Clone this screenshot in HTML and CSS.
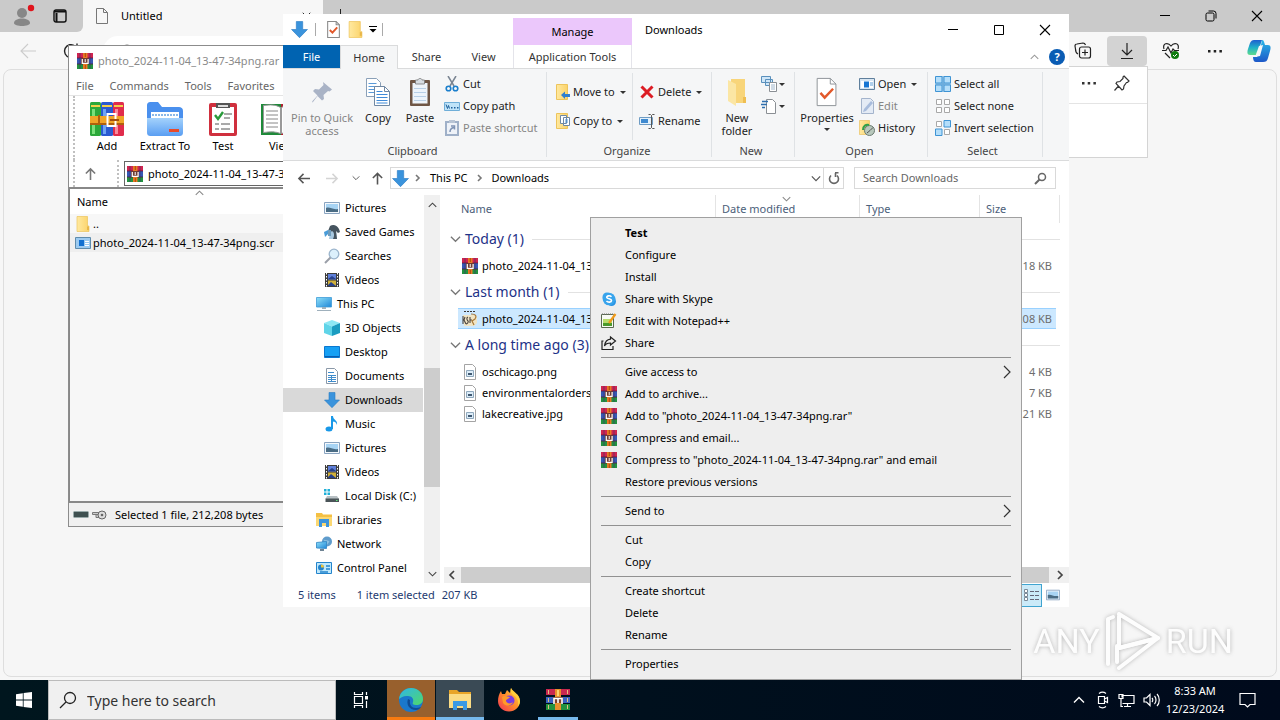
FILE: index.html
```html
<!DOCTYPE html>
<html lang="en">
<head>
<meta charset="utf-8">
<title>Desktop</title>
<meta name="viewport" content="width=device-width, initial-scale=1">
<link rel="stylesheet" href="styles.css">
</head>
<body>
<svg class="sprite" aria-hidden="true">
  <defs>
    <linearGradient id="g-folder" x1="0" x2="1"><stop offset="0" stop-color="#ffe9a0"/><stop offset="1" stop-color="#fbd36a"/></linearGradient>
    <linearGradient id="g-blue" x1="0" x2="1" y1="0" y2="1"><stop offset="0" stop-color="#8fe0f8"/><stop offset="1" stop-color="#1f87d8"/></linearGradient>
    <linearGradient id="g-folderblue" x1="0" x2="0" y1="0" y2="1"><stop offset="0" stop-color="#a4d2fc"/><stop offset="1" stop-color="#5a9ef2"/></linearGradient>
    <linearGradient id="g-cop1" x1="0" x2="0" y1="0" y2="1"><stop offset="0" stop-color="#1e5fd0"/><stop offset=".5" stop-color="#20b0c8"/><stop offset="1" stop-color="#5fdc8c"/></linearGradient>
    <linearGradient id="g-cop2" x1="0" x2="0" y1="0" y2="1"><stop offset="0" stop-color="#2ab8e8"/><stop offset="1" stop-color="#1d58c8"/></linearGradient>
    <linearGradient id="g-edge" x1="0" x2="1" y1="0" y2="1"><stop offset="0" stop-color="#2fb6e8"/><stop offset="1" stop-color="#4fd86a"/></linearGradient>
    <linearGradient id="g-fox" x1="1" x2="0" y1="0" y2="1"><stop offset="0" stop-color="#ffe14a"/><stop offset=".5" stop-color="#ff8a2a"/><stop offset="1" stop-color="#f0305a"/></linearGradient>
  </defs>
  <symbol id="rar" viewBox="0 0 16 16">
    <path fill="#cf2450" d="M0 0h16v5H0z"/><path fill="#3558b4" d="M0 5h16v6H0z"/><path fill="#22923f" d="M0 11h16v5H0z"/>
    <path fill="#5a1030" d="M0 4.500h16v1H0zM0 10.500h16v1H0z" opacity=".7"/>
    <path fill="#40306a" d="M2.500 0h1v16h-1zM12.500 0h1v16h-1z" opacity=".6"/>
    <path fill="#ea7a24" d="M6 0h4.500v5H6zM6 11h4.500v5H6z"/><path fill="#a84a10" d="M7.800 0h1v4h-1zM7.800 12h1v4h-1z"/>
    <path fill="#6f3c34" d="M4 5h8v6H4z"/><path fill="none" stroke="#fff" stroke-width="1.200" d="M5.300 6v4.400h5.800V6"/><path fill="#fff" d="M7.700 6h1v3h-1z"/>
  </symbol>
  <symbol id="downarrow" viewBox="0 0 16 16"><path fill="#3a93dc" stroke="#2a7dc4" stroke-width=".6" d="M5 .5h6V8h4.500L8 15.700.5 8H5z"/></symbol>
  <symbol id="folder" viewBox="0 0 16 16"><path fill="url(#g-folder)" stroke="#edc45c" stroke-width=".7" d="M2 .5h10.500V10H14v5.500H2z"/><path fill="#e8b648" d="M12 10.500h2V14h-2z"/></symbol>
  <symbol id="chk" viewBox="0 0 16 16"><path fill="#fff" stroke="#8a8a8a" d="M2.500.5h8l3 3v12h-11z"/><path fill="none" stroke="#8a8a8a" d="M10.500.5v3h3"/><path fill="none" stroke="#e2582a" stroke-width="1.800" d="M4.500 8.500 7 11l4.500-5"/></symbol>
  <symbol id="bigchk" viewBox="0 0 24 32"><path fill="#fff" stroke="#8a8f94" d="M1.500 1.500h14l6 6v23h-20z"/><path fill="none" stroke="#8a8f94" d="M15.500 1.500v6h6"/><path fill="none" stroke="#e2582a" stroke-width="2.600" d="m5 17 4.500 5 9-9.500"/></symbol>
  <symbol id="pin" viewBox="0 0 24 24"><path fill="#a9b3c6" d="m13 2 9 7.500-2.500 2-1.500-.5-4.500 4 .5 4-2 1.500-4.500-4.500L3 22l-1 .5L2.500 21l5-5.500L3 11l2-2 4 .5 4.500-4.500z"/></symbol>
  <symbol id="copydocs" viewBox="0 0 26 30"><path fill="#fff" stroke="#8aa0b8" d="M1.500 1.500h10l4 4v14h-14z"/><path stroke="#5a9ad8" d="M3.500 6.500h8m-8 3h10m-10 3h10m-10 3h10"/><path fill="#fff" stroke="#6f88a4" d="M9.500 9.500h10l5 5v14h-15z"/><path fill="none" stroke="#6f88a4" d="M19.500 9.500v5h5"/><path stroke="#3f8ad8" d="M11.500 14.500h6m-6 3h11m-11 3h11m-11 3h11m-11 2.500h11"/></symbol>
  <symbol id="clip" viewBox="0 0 22 30"><rect x="1" y="3" width="20" height="26" rx="1" fill="#6f5645"/><path fill="#eef4fa" d="M3.500 6h15v20.500h-15z"/><path fill="#d8dde2" stroke="#777" stroke-width=".8" d="M6.500 3h2.500c0-2 4-2 4 0h2.500v4h-9z"/><path stroke="#b8cfe6" d="M5 11.500h12m-12 4h12m-12 4h12m-12 4h12"/></symbol>
  <symbol id="scissors" viewBox="0 0 14 16"><path fill="none" stroke="#7a8592" stroke-width="1.500" d="m3 0 6 10M11 0 5 10"/><circle cx="3.500" cy="12.500" r="2.300" fill="none" stroke="#1b7fcc" stroke-width="1.600"/><circle cx="10.500" cy="12.500" r="2.300" fill="none" stroke="#1b7fcc" stroke-width="1.600"/></symbol>
  <symbol id="cpath" viewBox="0 0 16 16"><path fill="#bfe3f8" stroke="#6faed8" d="M.5 4.500h15v8H.5z"/><path fill="none" stroke="#1d5f9a" d="m2 6.500 1.500 4 1-3 1 3"/><path fill="#1d5f9a" d="M7 9h1.500v1.500H7zM10 9h1.500v1.500H10zM13 9h1.500v1.500H13z"/></symbol>
  <symbol id="pshort" viewBox="0 0 14 16"><path fill="#9fb0c8" d="M0 1h14v15H0z"/><path fill="#eef2f8" d="M2 3h10v11H2z"/><path fill="#b8c4d4" d="M4 0h6v3H4z"/><path fill="none" stroke="#7f93b4" stroke-width="1.500" d="M5 12c0-3 1-4 4-4.500M6 6h3.500v3.500"/></symbol>
  <symbol id="moveto" viewBox="0 0 14 16"><path fill="url(#g-folder)" stroke="#edc45c" d="M.5.5h11v15H.5z"/><path fill="#2f7fd0" d="m5 11 4-3.500V10h5v3H9v2z"/></symbol>
  <symbol id="copyto" viewBox="0 0 14 16"><path fill="url(#g-folder)" stroke="#edc45c" d="M.5.5h11v15H.5z"/><path fill="#fff" stroke="#6f88a4" d="M4.500 2.500h6v8h-6zM7.500 4.500h6v8h-6z"/><path stroke="#4f94d8" d="M9 7h3M9 9h3"/></symbol>
  <symbol id="redx" viewBox="0 0 14 14"><path fill="none" stroke="#dc1c24" stroke-width="3" d="m1.500 1.500 11 11m0-11-11 11"/></symbol>
  <symbol id="rename" viewBox="0 0 16 16"><path fill="#e4f1fb" stroke="#6f9cc4" d="M.5 4.500h13v7H.5z"/><path fill="#3f8ad0" d="M2 6h7v4H2z"/><path fill="none" stroke="#555" d="M9.500 1.500h2l1 1 1-1h2m-3 1v12m-3 1h2l1-1 1 1h2"/></symbol>
  <symbol id="bigfolder" viewBox="0 0 22 30"><path fill="#f8d57a" d="M5 2h14v24H5z"/><path fill="#fbe6a4" d="m2 3 8 4v22l-8-5z"/><path fill="#efbe52" d="M17 20h3v6h-3z"/></symbol>
  <symbol id="newitem" viewBox="0 0 16 16"><path fill="#cfe6f8" stroke="#5a90bc" d="M.5.500h9v6h-9zM4.500 3.500h7v6h-7z"/><path fill="#fff" stroke="#8a8f94" d="M8.500 6.500h7v9h-7z"/><path stroke="#9fb6cc" d="M10 9h4m-4 2h4m-4 2h4"/></symbol>
  <symbol id="easy" viewBox="0 0 16 16"><path fill="#fff" stroke="#8a8f94" d="M5.500 1.500h6l3 3v11h-9z"/><path stroke="#2f6fae" stroke-width="1.300" d="M1 3.500h6M0 6.500h6M1 9.500h3"/></symbol>
  <symbol id="open" viewBox="0 0 16 12"><path fill="#d8e6f2" stroke="#5f7f9c" d="M.5.500h15v11H.5z"/><path fill="#fff" d="M2 3h12v7H2z"/><path fill="#1976d2" d="M5 3.500h5v6H5z"/><path stroke="#5f9fd8" d="M11 5h3m-3 2h3"/></symbol>
  <symbol id="edit" viewBox="0 0 16 16"><path fill="#e4ebf5" stroke="#a4b4cc" d="M2.500.5h9l3 3v12h-12z"/><path fill="#a8bcdc" d="m4 14 1-3 7-8 2 2-7 8z"/></symbol>
  <symbol id="history" viewBox="0 0 16 16"><path fill="url(#g-folder)" stroke="#e8bb50" stroke-width=".6" d="M.5.500h10v14H.5z"/><circle cx="10.500" cy="10.500" r="5" fill="#b8c8bc" stroke="#6a7a70"/><path fill="none" stroke="#2fa04a" stroke-width="2" d="M4 10c0-4 3-6 6-5"/><path fill="none" stroke="#555" d="m8 13 3-2.500 3-3"/></symbol>
  <symbol id="selall" viewBox="0 0 16 16"><path fill="#b4defa" stroke="#3f94d4" d="M.5.500h6.500v6.500H.5zM9 .5h6.500v6.500H9zM.5 9h6.500v6.500H.5zM9 9h6.500v6.500H9z"/><path stroke="#3f94d4" d="M8 0v16M0 8h16"/></symbol>
  <symbol id="selnone" viewBox="0 0 16 16"><path fill="#fff" stroke="#a8a8a8" d="M1.500 1.500h5v5h-5zM9.500 1.500h5v5h-5zM1.500 9.500h5v5h-5zM9.500 9.500h5v5h-5z"/></symbol>
  <symbol id="selinv" viewBox="0 0 16 16"><path fill="#fff" stroke="#a8a8a8" d="M1.500 1.500h5v5h-5zM9.500 9.500h5v5h-5z"/><path fill="#b4defa" stroke="#3f94d4" d="M9 .5h6.500v6.500H9zM.5 9h6.500v6.500H.5z"/></symbol>
  <symbol id="pictures" viewBox="0 0 16 16"><path fill="#f4f8fc" stroke="#8aa4c0" d="M.5 2.500h15v11H.5z"/><path fill="#a8d4f4" d="M2 4h12v8H2z"/><path fill="#4a6c84" d="M2 8c4-1.500 6 2 12 1v3H2z"/></symbol>
  <symbol id="games" viewBox="0 0 16 16"><path fill="#a8c8e0" d="M7 3c3-3 5 0 5 3l1 9H5c1-4 0-6 0-8z"/><path fill="#46545f" d="M6 2c3-2 7-1 9 3l1 3-2 1-2-2 1 8H9c2-4 1-7-1-8l-3 2-1-2z"/><path fill="#4a9cd8" d="m0 8 4-2v4l-3 3z"/><path fill="#6f9cbc" d="M4 6h3v6H4z"/></symbol>
  <symbol id="search" viewBox="0 0 16 16"><circle cx="10" cy="6" r="4.800" fill="#dcf0fc" stroke="#9ab4cc" stroke-width="1.300"/><path stroke="#9a9fa8" stroke-width="2" d="M6.500 9.500 1 15"/></symbol>
  <symbol id="videos" viewBox="0 0 16 16"><path fill="#3c3c3c" d="M1 1h14v14H1z"/><path fill="#5f7fd8" d="M4 2h8v5.500H4z"/><path fill="#d0b03a" d="M4 8.500h8V14H4z"/><path fill="#26408c" d="m4 7 4-3 4 3zM4 13l3-3 5 4H4z"/><path stroke="#fff" stroke-dasharray="1.500 1.500" d="M2.500 1v14m11-14v14"/></symbol>
  <symbol id="thispc" viewBox="0 0 16 16"><path fill="url(#g-blue)" stroke="#3f9cd8" stroke-width=".8" d="M.5 1.500h15v9.500H.5z"/><path fill="#9fb0bc" d="M6 11h4v2H6zM1 14h14v1H1z"/></symbol>
  <symbol id="cube" viewBox="0 0 16 16"><path fill="#8ce8f4" d="m8 0 8 3-8 3.500L0 3z"/><path fill="#5fd4e8" d="m0 3 8 3.500V16l-8-3z"/><path fill="#1a9cc0" d="m16 3-8 3.500V16l8-3z"/></symbol>
  <symbol id="desk" viewBox="0 0 16 16"><path fill="#16a0f4" stroke="#0a78d0" d="M.5 2.500h15v11H.5z"/><path stroke="#0a5cb0" d="M1 12.500h14"/></symbol>
  <symbol id="docs" viewBox="0 0 16 16"><path fill="#fff" stroke="#8a98a8" d="M2.500.5h8l3 3v12h-11z"/><path stroke="#3f8ccc" d="M4 4.500h6M4 7.500h8M4 9.500h8m-8 2h8m-8 2h8M7.500 7v7"/></symbol>
  <symbol id="music" viewBox="0 0 16 16"><ellipse cx="5" cy="13" rx="3.500" ry="2.500" fill="#1898e8"/><path fill="#1898e8" d="M7 0h2c0 4 5 4 4 9-1-3-2-3-4-3.500V13H7z"/></symbol>
  <symbol id="disk" viewBox="0 0 16 16"><path fill="#20b0d8" d="M0 1h2.500v2.500H0zM3.500 1H6v2.500H3.500zM0 4.500h2.500V7H0zM3.500 4.500H6V7H3.500z"/><path fill="#b8c0c4" d="m3 8h10l2 3H1.500z"/><path fill="#4a5458" d="M1.500 10.500h13.500v3.500H1.500z"/><path fill="#5fe87a" d="M12 12h1.500v1H12z"/></symbol>
  <symbol id="libs" viewBox="0 0 16 16"><path fill="#f4c044" d="M0 1h6l1 1.500h9V14H0z"/><path fill="#fbd873" d="M0 5h16v9H0z"/><path fill="#3c94dc" d="M3 7h10v8h-3v-4H6v4H3z"/></symbol>
  <symbol id="net" viewBox="0 0 16 16"><circle cx="11" cy="5.500" r="5" fill="#5f9ccc"/><path fill="#8cc0e0" d="M7.500 3.500c2 1 4 0 6 2l-3 4z"/><path fill="url(#g-blue)" stroke="#2f84c4" stroke-width=".8" d="m.5 6.500 10-1v7l-10-.5z"/><path fill="#6f8494" d="M4 13h4v2H4z"/></symbol>
  <symbol id="cpl" viewBox="0 0 16 16"><path fill="#bfe8fc" stroke="#2484cc" d="M.5 2.500h15v11H.5z"/><circle cx="5" cy="7.500" r="3" fill="#2484cc"/><path fill="#f0c43a" d="M5 7.500v-3a3 3 0 0 1 3 3z"/><path stroke="#2484cc" stroke-width="1.400" d="M10 6h4m-4 3h4M4 12h8"/></symbol>
  <symbol id="imgfile" viewBox="0 0 16 16"><path fill="#fff" stroke="#a4a4a4" d="M2.500.5h8l3 3v12h-11z"/><path fill="#dcecf8" stroke="#8fa8bc" d="M4.500 6.500h7v6h-7z"/><path fill="#3f5870" d="M6 9h4v2H6z"/></symbol>
  <symbol id="scrfile" viewBox="0 0 16 16"><path fill="#f0e4c4" d="M1 4h12l2 2v6l-3 3H2z"/><path stroke="#3a3430" stroke-dasharray="2 1" d="M2 .5h12"/><path fill="none" stroke="#4a4440" stroke-width="1.100" d="M1 5v8m2-7-1 3 2 4m2-7c-2 1-1 3 0 4s-1 3-2 3m4-7v6m0-3h2"/><path fill="none" stroke="#a87838" stroke-width="1.200" d="M9 3c5 0 6 2 4 5l-3 2 2 4"/></symbol>
  <symbol id="scrapp" viewBox="0 0 16 12"><path fill="#9ccaf0" stroke="#5f8cac" d="M.5.500h15v11H.5z"/><path fill="#1270d0" d="M4 3h5v6H4z"/><path stroke="#fff" d="M10 4.500h4m-4 2h4m-4 2h4"/></symbol>
  <symbol id="skype" viewBox="0 0 16 16"><circle cx="6" cy="6" r="4.500" fill="#38a4ec"/><circle cx="10.500" cy="10.500" r="4.500" fill="#2a94e4"/><circle cx="8" cy="8" r="6.300" fill="#38a4ec"/><path fill="none" stroke="#fff" stroke-width="1.600" d="M10.500 5.800C9 4.300 5.500 4.500 5.800 6.500c.5 1.700 4.700 1 4.700 3 0 2-3.500 2.200-5 .5"/></symbol>
  <symbol id="npp" viewBox="0 0 16 16"><path fill="#f8fbf4" stroke="#5a6a50" d="M.5 1.500h12v13H.5z"/><path fill="#b8dc6a" d="M2 6h9v7H2z"/><path fill="#4a9a2a" d="M2 10h9v3H2z"/><path stroke="#777" stroke-dasharray="1 1" d="M1 1h11"/><path stroke="#f09a1c" stroke-width="2.200" d="M14.500 1 8 10"/></symbol>
  <symbol id="share" viewBox="0 0 16 16"><path fill="none" stroke="#222" stroke-width="1.200" d="M2.500 6H1v8.500h11V11M9.500 2l5 4-5 4V8C6 8 4.500 9 3.500 11 4 7 6 4.500 9.500 4.200z"/></symbol>
  <symbol id="right" viewBox="0 0 8 14"><path fill="none" stroke="#333" stroke-width="1.200" d="m1 1 6 6-6 6"/></symbol>
  <symbol id="cdown" viewBox="0 0 12 8"><path fill="none" stroke="currentColor" stroke-width="1.400" d="m1 1.500 5 5 5-5"/></symbol>
  <symbol id="cup" viewBox="0 0 12 8"><path fill="none" stroke="currentColor" stroke-width="1.400" d="m1 6.500 5-5 5 5"/></symbol>
  <symbol id="cright" viewBox="0 0 8 12"><path fill="none" stroke="currentColor" stroke-width="1.600" d="m2 3 3 3-3 3"/></symbol>
  <symbol id="cbold" viewBox="0 0 8 12"><path fill="none" stroke="currentColor" stroke-width="1.700" d="m2 2 4 4-4 4"/></symbol>
  <symbol id="aleft" viewBox="0 0 14 14"><path fill="none" stroke="currentColor" stroke-width="1.600" d="M14 7H2m5-5L2 7l5 5"/></symbol>
  <symbol id="aup" viewBox="0 0 14 14"><path fill="none" stroke="currentColor" stroke-width="1.700" d="M7 14V2M2 7l5-5 5 5"/></symbol>
  <symbol id="min" viewBox="0 0 12 12"><path stroke="#000" d="M1 5.500h10"/></symbol>
  <symbol id="max" viewBox="0 0 12 12"><path fill="none" stroke="#000" d="M1.500 1.500h9v9h-9z"/></symbol>
  <symbol id="close" viewBox="0 0 12 12"><path fill="none" stroke="#000" stroke-width="1.100" d="m1 1 10 10m0-10L1 11"/></symbol>
</svg>

<main class="desktop">
  <section class="edge" aria-label="Browser">
    <header class="edge-tabs">
      <div class="edge-corner">
        <button aria-label="Profile"><svg width="24" height="24" viewBox="0 0 24 24"><circle cx="10" cy="9" r="5" fill="#878787"/><path fill="#878787" d="M2 19c0-6 16-6 16 0 0 4-16 4-16 0z"/><circle cx="19" cy="4" r="3.200" fill="#e0141c"/></svg></button>
        <button aria-label="Tab actions"><svg width="14" height="14" viewBox="0 0 14 14"><rect x="1" y="1" width="12" height="12" rx="2" fill="none" stroke="#111" stroke-width="1.400"/><path stroke="#111" stroke-width="2" d="M1 2.500h12M3.500 4v9"/></svg></button>
      </div>
      <div class="edge-tab">
        <svg width="12" height="16" viewBox="0 0 12 16"><path fill="none" stroke="#777" d="M.5.500h7l4 4v11H.5zM7.500.5v4h4"/></svg>
        <span>Untitled</span>
        <button aria-label="Close tab"><svg width="9" height="9"><use href="#close"/></svg></button>
      </div>
      <button class="edge-new" aria-label="New tab"><svg width="14" height="14" viewBox="0 0 14 14"><path stroke="#222" d="M7.500 0v14M0 7h14"/></svg></button>
      <div class="edge-win">
        <button aria-label="Minimize browser"><svg width="12" height="12"><use href="#min"/></svg></button>
        <button aria-label="Restore browser"><svg width="12" height="12" viewBox="0 0 12 12"><rect x="1" y="3" width="8" height="8" rx="1.500" fill="none" stroke="#000"/><path fill="none" stroke="#000" d="M3.500 1h5A2.500 2.500 0 0 1 11 3.500v5"/></svg></button>
        <button aria-label="Close browser"><svg width="12" height="12"><use href="#close"/></svg></button>
      </div>
    </header>
    <div class="edge-bar">
      <button class="faint" aria-label="Back"><svg width="16" height="16" viewBox="0 0 16 16"><path fill="none" stroke="currentColor" stroke-width="1.100" d="M16 8H1m7-7L1 8l7 7"/></svg></button>
      <button aria-label="Refresh"><svg width="16" height="16" viewBox="0 0 16 16"><path fill="none" stroke="#222" stroke-width="1.400" d="M14.500 8A6.500 6.500 0 1 1 12 3l1.500 1.500M14 .5v4h-4"/></svg></button>
      <div class="edge-url"><svg width="14" height="14" viewBox="0 0 14 14"><circle cx="7" cy="7" r="6" fill="none" stroke="#777" stroke-width="1.200"/></svg></div>
      <div class="edge-tools">
        <button aria-label="Collections"><svg width="18" height="18" viewBox="0 0 18 18"><path fill="none" stroke="#222" stroke-width="1.200" d="M4 12C2 11 1.500 9 1.500 7L1 4c0-1 .5-2 2-2l6-1c1.500 0 2 .5 2.500 2"/><rect x="5.500" y="5" width="11" height="11" rx="2" fill="none" stroke="#222" stroke-width="1.200"/><path stroke="#222" stroke-width="1.200" d="M11 7.500v6M8 10.500h6"/></svg></button>
        <button class="on" aria-label="Downloads"><svg width="14" height="18" viewBox="0 0 14 18"><path fill="none" stroke="#222" stroke-width="1.200" d="M7 1v12M2 8l5 5 5-5M1 16.500h12"/></svg></button>
        <button aria-label="Browser essentials"><svg width="18" height="18" viewBox="0 0 18 18"><path fill="none" stroke="#222" stroke-width="1.200" d="M2 7C0 1 6 0 9 4c3-4 9-3 7 3M0 8.500h4L6 5l3 6 2-4 1.500 1.500H17M3 11l5 5"/><circle cx="13" cy="13" r="4" fill="#0f7b0f"/><path fill="none" stroke="#fff" d="m11 13 1.500 1.500L15 12"/></svg></button>
        <button aria-label="Settings"><svg width="14" height="4" viewBox="0 0 14 4"><path fill="#222" d="M0 1h2.500v2.500H0zM5.700 1h2.500v2.500H5.700zM11.400 1h2.500v2.500h-2.500z"/></svg></button>
        <button aria-label="Copilot"><svg width="24" height="24" viewBox="0 0 24 24"><path fill="url(#g-cop1)" d="M7 1h8l-5 15H3C0 16 0 13 1 10l2-6c1-2 2-3 4-3z"/><path fill="url(#g-cop2)" d="M15 1c2 0 2 2 3 5h3c3 0 3 3 2 6l-2 7c-1 3-2 4-5 4H9c-2 0-3-2-3-5l4 0 4-12z"/><path fill="#f7f7f7" d="m12 7 4-1-3 11-5 1z"/></svg></button>
      </div>
    </div>
    <div class="edge-page"></div>
  </section>

  <section class="downloads-pop" aria-label="Browser downloads">
    <div class="pop-head">
      <svg width="14" height="4" viewBox="0 0 14 4"><path fill="#333" d="M0 1h2.500v2.500H0zM5.700 1h2.500v2.500H5.700zM11.400 1h2.500v2.500h-2.500z"/></svg>
      <svg width="16" height="16" viewBox="0 0 16 16"><path fill="none" stroke="#333" stroke-width="1.200" d="m10 1 5 5-1.500 1.500-1 0-2.500 3.500-.5 3-1.500 1L2 8.500l1-1.500 3-.5L9 3.500 9 2zM4.500 11 .5 15.500"/></svg>
    </div>
  </section>

  <section class="winrar" aria-label="WinRAR">
    <header class="wr-title"><svg width="16" height="16"><use href="#rar"/></svg><span>photo_2024-11-04_13-47-34png.rar</span></header>
    <nav class="wr-menu"><button>File</button><button>Commands</button><button>Tools</button><button>Favorites</button></nav>
    <div class="wr-tools">
      <button><svg width="34" height="34" viewBox="0 0 34 34"><rect x="0" y="0" width="11" height="34" rx="1.500" fill="#2ca83a"/><rect x="11" y="0" width="12" height="34" rx="1.500" fill="#2a5ad0"/><rect x="23" y="0" width="11" height="34" rx="1.500" fill="#e02c4c"/><path fill="#f4d04a" d="M1 3h9v2H1zM12 3h10v2H12zM24 3h9v2h-9z"/><path fill="#7ae07a" d="M2 7h3v25H2z"/><path fill="#6fa4f4" d="M13 7h3v25h-3z"/><path fill="#f88a9c" d="M25 7h3v25h-3z"/><path fill="#f0a428" d="M0 14h34v8H0z"/><path fill="#b0600c" d="M0 21h34v2H0zM8 13h2v10H8z"/><rect x="17.500" y="12" width="8" height="12" fill="none" stroke="#fff" stroke-width="2"/><path fill="#a05010" d="M20 17h9v2h-9z"/></svg><span>Add</span></button>
      <button><svg width="36" height="34" viewBox="0 0 36 34"><path fill="#4a90ee" d="M0 4c0-3 1-4 4-4h7l4 5h17c2 0 4 1 4 4v10H0z"/><path fill="#fff" d="M4 10h28v12H4z"/><path stroke="#8ab8e8" stroke-width="2" stroke-dasharray="2 1" d="M5 13h26"/><path fill="url(#g-folderblue)" d="M0 16h36v14c0 3-1 4-4 4H4c-3 0-4-1-4-4z"/><path fill="#e84a2a" d="M22 27h10v3H22z"/></svg><span>Extract To</span></button>
      <button><svg width="28" height="34" viewBox="0 0 28 34"><rect width="28" height="33" rx="2" y="1" fill="#d0303e"/><path fill="#fff" d="M3 5h22v26H3z"/><path fill="#555" d="M7 1h14v5H7z"/><path fill="#ddd" d="M9 3h10v2H9z"/><path fill="none" stroke="#2a9a3a" stroke-width="2.400" d="m6 13 3 4 5-7"/><path stroke="#555" d="M15 12h8m-8 4h6M6 22h4m2 0h9M6 27h4m2 0h9"/></svg><span>Test</span></button>
      <button><svg width="40" height="34" viewBox="0 0 40 34"><path fill="#1f8a3a" d="M0 2h20v31H0z"/><path fill="#b02030" d="M20 2h20v31H20z"/><path fill="#fff" stroke="#999" d="M2.500 3.500c7-1 12-1 17 2v26c-5-2-10-2-17-1zM37.500 3.500c-7-1-12-1-17 2v26c5-2 10-2 17-1z"/><path stroke="#888" d="M5 9h12M5 13h12M5 17h12M5 21h12M5 25h12"/></svg><span>View</span></button>
    </div>
    <div class="wr-path"><button aria-label="Up one level"><svg width="13" height="13"><use href="#aup"/></svg></button><div class="wr-address"><svg width="16" height="16"><use href="#rar"/></svg><span>photo_2024-11-04_13-47-34png.rar</span></div></div>
    <div class="wr-list">
      <div class="wr-head">Name<svg width="9" height="6"><use href="#cup"/></svg></div>
      <div class="wr-row"><svg width="16" height="16"><use href="#folder"/></svg><span>..</span></div>
      <div class="wr-row sel"><svg width="16" height="12"><use href="#scrapp"/></svg><span>photo_2024-11-04_13-47-34png.scr</span></div>
    </div>
    <footer class="wr-status"><svg width="34" height="12" viewBox="0 0 34 12"><rect x=".5" y="2.500" width="15" height="6" rx="1" fill="#3f5050" stroke="#9aa"/><path fill="#ccc" stroke="#777" d="M19.500 3.500h8v2h-8zM23 5.500h4v3h-4z"/><circle cx="29" cy="6" r="4" fill="#ddd" stroke="#666"/><circle cx="29" cy="6" r="1.300" fill="#666"/></svg><span>Selected 1 file, 212,208 bytes</span></footer>
  </section>

  <section class="explorer" aria-label="Downloads folder">
    <header class="ex-title">
      <div class="quick">
        <svg width="17" height="17"><use href="#downarrow"/></svg><i></i>
        <button aria-label="Properties"><svg width="17" height="17"><use href="#chk"/></svg></button>
        <button aria-label="New folder"><svg width="17" height="17"><use href="#folder"/></svg></button>
        <button aria-label="Customize"><svg width="8" height="7" viewBox="0 0 8 7"><path d="M0 0h8v1H0zM.5 3h7L4 6.500z"/></svg></button><i></i>
      </div>
      <div class="manage">Manage</div>
      <h1>Downloads</h1>
      <div class="ex-win">
        <button aria-label="Minimize"><svg width="12" height="12"><use href="#min"/></svg></button>
        <button aria-label="Maximize"><svg width="12" height="12"><use href="#max"/></svg></button>
        <button aria-label="Close"><svg width="12" height="12"><use href="#close"/></svg></button>
      </div>
    </header>
    <nav class="ex-tabs">
      <button class="file">File</button><button class="home">Home</button><button class="plain">Share</button><button class="plain">View</button><button class="apptools">Application Tools</button>
      <div class="ex-help"><svg width="9" height="6"><use href="#cup"/></svg><button aria-label="Help">?</button></div>
    </nav>
    <div class="ribbon">
      <div class="rgroup g-clip">
        <div class="rbody">
          <button class="big pinb dim"><svg width="24" height="24"><use href="#pin"/></svg><span>Pin to Quick access</span></button>
          <button class="big"><svg width="26" height="30"><use href="#copydocs"/></svg><span>Copy</span></button>
          <button class="big"><svg width="22" height="30"><use href="#clip"/></svg><span>Paste</span></button>
          <div class="rcol">
            <button><svg width="16" height="16"><use href="#scissors"/></svg>Cut</button>
            <button><svg width="16" height="16"><use href="#cpath"/></svg>Copy path</button>
            <button class="dim"><svg width="16" height="16"><use href="#pshort"/></svg>Paste shortcut</button>
          </div>
        </div>
        <h2>Clipboard</h2>
      </div>
      <div class="rgroup g-org">
        <div class="rbody">
          <div class="rcol two">
            <button class="dd"><svg width="14" height="16"><use href="#moveto"/></svg>Move to</button>
            <button class="dd"><svg width="14" height="16"><use href="#copyto"/></svg>Copy to</button>
          </div>
          <div class="rcol two line">
            <button class="dd"><svg width="16" height="14"><use href="#redx"/></svg>Delete</button>
            <button><svg width="16" height="16"><use href="#rename"/></svg>Rename</button>
          </div>
        </div>
        <h2>Organize</h2>
      </div>
      <div class="rgroup g-new">
        <div class="rbody">
          <button class="big"><svg width="22" height="30"><use href="#bigfolder"/></svg><span>New folder</span></button>
          <div class="rcol">
            <button class="dd" aria-label="New item"><svg width="16" height="16"><use href="#newitem"/></svg></button>
            <button class="dd" aria-label="Easy access"><svg width="16" height="16"><use href="#easy"/></svg></button>
          </div>
        </div>
        <h2>New</h2>
      </div>
      <div class="rgroup g-open">
        <div class="rbody">
          <button class="big props"><svg width="24" height="30"><use href="#bigchk"/></svg><span>Properties</span></button>
          <div class="rcol">
            <button class="dd"><svg width="16" height="12"><use href="#open"/></svg>Open</button>
            <button class="dim"><svg width="16" height="16"><use href="#edit"/></svg>Edit</button>
            <button><svg width="16" height="16"><use href="#history"/></svg>History</button>
          </div>
        </div>
        <h2>Open</h2>
      </div>
      <div class="rgroup g-sel">
        <div class="rbody">
          <div class="rcol">
            <button><svg width="16" height="16"><use href="#selall"/></svg>Select all</button>
            <button><svg width="16" height="16"><use href="#selnone"/></svg>Select none</button>
            <button><svg width="16" height="16"><use href="#selinv"/></svg>Invert selection</button>
          </div>
        </div>
        <h2>Select</h2>
      </div>
    </div>
    <div class="ex-addr">
      <button aria-label="Back"><svg width="13" height="13"><use href="#aleft"/></svg></button>
      <button class="faint flip" aria-label="Forward"><svg width="13" height="13"><use href="#aleft"/></svg></button>
      <button class="narrow" aria-label="Recent locations"><svg width="8" height="6"><use href="#cdown"/></svg></button>
      <button aria-label="Up"><svg width="13" height="14"><use href="#aup"/></svg></button>
      <div class="crumbs">
        <svg width="17" height="17"><use href="#downarrow"/></svg><svg width="8" height="12"><use href="#cright"/></svg>
        <a href="#">This PC</a><svg width="8" height="12"><use href="#cright"/></svg><a href="#">Downloads</a>
        <button class="prev" aria-label="Previous locations"><svg width="10" height="7"><use href="#cdown"/></svg></button>
        <button class="reload" aria-label="Refresh"><svg width="12" height="13" viewBox="0 0 12 13"><path fill="none" stroke="#666" stroke-width="1.600" d="M3 3.500a4.500 4.500 0 1 0 6 0M7 .8h3.500M7.500 1v4"/></svg></button>
      </div>
      <label class="find"><input type="search" placeholder="Search Downloads" aria-label="Search Downloads"><svg width="13" height="13" viewBox="0 0 13 13"><circle cx="8" cy="5" r="3.500" fill="none" stroke="#666" stroke-width="1.500"/><path stroke="#666" stroke-width="2" d="M5.500 7.500 1 12"/></svg></label>
    </div>
    <div class="ex-body">
      <ul class="tree">
        <li class="sub"><svg width="16" height="16"><use href="#pictures"/></svg>Pictures</li>
        <li class="sub"><svg width="16" height="16"><use href="#games"/></svg>Saved Games</li>
        <li class="sub"><svg width="16" height="16"><use href="#search"/></svg>Searches</li>
        <li class="sub"><svg width="16" height="16"><use href="#videos"/></svg>Videos</li>
        <li><svg width="16" height="16"><use href="#thispc"/></svg>This PC</li>
        <li class="sub"><svg width="16" height="16"><use href="#cube"/></svg>3D Objects</li>
        <li class="sub"><svg width="16" height="16"><use href="#desk"/></svg>Desktop</li>
        <li class="sub"><svg width="16" height="16"><use href="#docs"/></svg>Documents</li>
        <li class="sub current"><svg width="16" height="16"><use href="#downarrow"/></svg>Downloads</li>
        <li class="sub"><svg width="16" height="16"><use href="#music"/></svg>Music</li>
        <li class="sub"><svg width="16" height="16"><use href="#pictures"/></svg>Pictures</li>
        <li class="sub"><svg width="16" height="16"><use href="#videos"/></svg>Videos</li>
        <li class="sub"><svg width="16" height="16"><use href="#disk"/></svg>Local Disk (C:)</li>
        <li><svg width="16" height="16"><use href="#libs"/></svg>Libraries</li>
        <li><svg width="16" height="16"><use href="#net"/></svg>Network</li>
        <li><svg width="16" height="16"><use href="#cpl"/></svg>Control Panel</li>
      </ul>
      <div class="vscroll"><svg width="9" height="6"><use href="#cup"/></svg><div class="vtrack"><div class="vthumb"></div></div><svg width="9" height="6"><use href="#cdown"/></svg></div>
      <div class="files">
        <table>
          <colgroup><col><col class="c-date"><col class="c-type"><col class="c-size"></colgroup>
          <thead><tr><th>Name</th><th>Date modified<svg class="sort" width="9" height="6"><use href="#cdown"/></svg></th><th>Type</th><th class="last">Size</th></tr></thead>
          <tbody>
            <tr class="group"><td colspan="4"><div><svg width="11" height="8"><use href="#cdown"/></svg>Today (1)</div></td></tr>
            <tr><td><div><svg width="16" height="16"><use href="#rar"/></svg>photo_2024-11-04_13-47-34png.rar</div></td><td></td><td></td><td>18 KB</td></tr>
            <tr class="group"><td colspan="4"><div><svg width="11" height="8"><use href="#cdown"/></svg>Last month (1)</div></td></tr>
            <tr class="picked"><td><div><svg width="16" height="16"><use href="#scrfile"/></svg>photo_2024-11-04_13-47-34png.scr</div></td><td></td><td></td><td>208 KB</td></tr>
            <tr class="group"><td colspan="4"><div><svg width="11" height="8"><use href="#cdown"/></svg>A long time ago (3)</div></td></tr>
            <tr><td><div><svg width="16" height="16"><use href="#imgfile"/></svg>oschicago.png</div></td><td></td><td></td><td>4 KB</td></tr>
            <tr><td><div><svg width="16" height="16"><use href="#imgfile"/></svg>environmentalorders.jpg</div></td><td></td><td></td><td>7 KB</td></tr>
            <tr><td><div><svg width="16" height="16"><use href="#imgfile"/></svg>lakecreative.jpg</div></td><td></td><td></td><td>21 KB</td></tr>
          </tbody>
        </table>
        <div class="hscroll"><svg class="flip" width="8" height="12"><use href="#cbold"/></svg><div class="hthumb"></div><svg width="8" height="12"><use href="#cbold"/></svg></div>
      </div>
    </div>
    <footer class="ex-status">
      <span class="count">5 items</span><span>1 item selected</span><span>207 KB</span>
      <div class="views">
        <button class="on" aria-label="Details view"><svg width="16" height="13" viewBox="0 0 16 13"><path fill="#fff" stroke="#7a8a98" d="M.5.500h3v3h-3zM.5 4.500h3v3h-3zM.5 8.500h3v3h-3z"/><path stroke="#667" stroke-dasharray="4 1" d="M6 2.500h10M6 6.500h10M6 10.500h10"/></svg></button>
        <button aria-label="Large icons view"><svg width="14" height="14"><use href="#pictures"/></svg></button>
      </div>
    </footer>
  </section>

  <div class="brand"><span>ANY</span><svg width="58" height="62" viewBox="0 0 58 62"><g fill="none" stroke="#fff" stroke-width="4" stroke-linejoin="round" stroke-linecap="round"><path d="M15 6v32L54 28 15 4"/><path d="M13 52V36M15 38l39-10L15 58"/><path d="M4 54V9l5-2"/></g></svg><span>RUN</span></div>

  <ul class="menu" role="menu">
    <li><button role="menuitem"><i></i><b>Test</b></button></li>
    <li><button role="menuitem"><i></i>Configure</button></li>
    <li><button role="menuitem"><i></i>Install</button></li>
    <li><button role="menuitem"><i><svg width="16" height="16"><use href="#skype"/></svg></i>Share with Skype</button></li>
    <li><button role="menuitem"><i><svg width="16" height="16"><use href="#npp"/></svg></i>Edit with Notepad++</button></li>
    <li><button role="menuitem"><i><svg width="16" height="16"><use href="#share"/></svg></i>Share</button></li>
    <li class="sep" role="separator"></li>
    <li><button role="menuitem"><i></i>Give access to<svg class="more" width="8" height="14"><use href="#right"/></svg></button></li>
    <li><button role="menuitem"><i><svg width="16" height="16"><use href="#rar"/></svg></i>Add to archive...</button></li>
    <li><button role="menuitem"><i><svg width="16" height="16"><use href="#rar"/></svg></i>Add to "photo_2024-11-04_13-47-34png.rar"</button></li>
    <li><button role="menuitem"><i><svg width="16" height="16"><use href="#rar"/></svg></i>Compress and email...</button></li>
    <li><button role="menuitem"><i><svg width="16" height="16"><use href="#rar"/></svg></i>Compress to "photo_2024-11-04_13-47-34png.rar" and email</button></li>
    <li><button role="menuitem"><i></i>Restore previous versions</button></li>
    <li class="sep" role="separator"></li>
    <li><button role="menuitem"><i></i>Send to<svg class="more" width="8" height="14"><use href="#right"/></svg></button></li>
    <li class="sep" role="separator"></li>
    <li><button role="menuitem"><i></i>Cut</button></li>
    <li><button role="menuitem"><i></i>Copy</button></li>
    <li class="sep" role="separator"></li>
    <li><button role="menuitem"><i></i>Create shortcut</button></li>
    <li><button role="menuitem"><i></i>Delete</button></li>
    <li><button role="menuitem"><i></i>Rename</button></li>
    <li class="sep" role="separator"></li>
    <li><button role="menuitem"><i></i>Properties</button></li>
  </ul>
</main>

<footer class="taskbar">
  <button class="task start" aria-label="Start"><svg width="16" height="16" viewBox="0 0 16 16"><path fill="#fff" d="m0 2.200 6.800-1v6.400H0zM7.600 1.100 16 0v7.600H7.600zM0 8.400h6.800v6.400l-6.800-1zM7.600 8.400H16V16l-8.400-1.100z"/></svg></button>
  <label class="task-search"><svg width="18" height="18" viewBox="0 0 18 18"><circle cx="11" cy="7" r="5.500" fill="none" stroke="#222" stroke-width="1.300"/><path stroke="#222" stroke-width="1.300" d="M7 11 1 17"/></svg><input type="text" placeholder="Type here to search" aria-label="Type here to search"></label>
  <button class="task" aria-label="Task view"><svg width="18" height="18" viewBox="0 0 18 18"><path fill="none" stroke="#fff" stroke-width="1.200" d="M2.500 1v2.500h8V1M2.500 5.500h8v7h-8zM2.500 17v-2.500h8V17M14.500 1v3m0 6v7"/><path fill="#fff" d="M13 5h3v3.500h-3z"/></svg></button>
  <button class="task t-edge" aria-label="Microsoft Edge"><svg width="26" height="26" viewBox="0 0 26 26"><circle cx="13" cy="13" r="12" fill="#1a78cc"/><path fill="url(#g-edge)" d="M1 12C2 5 7 1 13 1c8 0 12 6 12 11 0 4-3 6-7 6-3 0-4-1-3-3 1-3-1-6-5-6-4-.5-7 1-9 3z"/><path fill="#0f4c94" d="M10 12c-2 5 1 11 8 11 2 0 4-1 5-3-8 3-12-1-11-7z"/></svg></button>
  <button class="task t-files" aria-label="File Explorer"><svg width="24" height="22" viewBox="0 0 24 22"><path fill="#e8a528" d="M1 1h8l2 2h12v5H1z"/><path fill="#fbdc84" d="M1 5h22v14H1z"/><path fill="#3b9ae4" d="M5 12h14v9h-4v-4H9v4H5z"/></svg></button>
  <button class="task" aria-label="Firefox"><svg width="24" height="24" viewBox="0 0 24 24"><path fill="url(#g-fox)" d="M1 13c0-4 1-7 3-10l1 3h3l2-4 3 3 1-5c2 4 9 6 9 13 0 6-5 10.500-11 10.500S1 19 1 13z"/><path fill="#ffcf3a" d="M14 0c1 4 8 6 9 13 0 2-1 4-2 5 1-7-2-9-5-11-2-2-3-4-2-7z"/><circle cx="12.500" cy="12.500" r="5" fill="#7a3ce0"/><path fill="#ff9a2a" d="M5 9c3-2 5 0 8 0-1 2-4 2-4 4 1 3 5 3 7 1-1 4-7 5-10 1z"/></svg></button>
  <button class="task t-rar" aria-label="WinRAR"><svg width="24" height="22" viewBox="0 0 24 22"><path fill="#c82850" d="M0 0h24v6H0z"/><path fill="#3a62c0" d="M0 8h24v6H0z"/><path fill="#22923f" d="M0 15h24v6H0z"/><path fill="#e0c080" d="M2 1h1v4H2zM21 1h1v4h-1zM2 9h1v4H2zM21 9h1v4h-1zM2 16h1v4H2zM21 16h1v4h-1z"/><path fill="#e8902c" d="M9 0h6v21H9z"/><path fill="#fcd070" d="M11 1h2v6h-2z"/><path fill="#7a4028" d="M7 8h10v6H7z"/><path fill="none" stroke="#fff" stroke-width="1.600" d="M8 15V9.500h8V15M12 10v4"/></svg></button>
  <div class="tray">
    <svg class="hidden-icons" width="12" height="8"><use href="#cup"/></svg>
    <svg width="14" height="18" viewBox="0 0 14 18"><path fill="none" stroke="#fff" stroke-width="1.200" d="M2.500 5.500h6v7h-6zM8.500 8l3-1.500v5L8.500 10M3 2.500c2-1.500 5-1.500 7 0M3 15.500c2 1.500 5 1.500 7 0"/></svg>
    <svg width="17" height="15" viewBox="0 0 17 15"><path fill="none" stroke="#fff" stroke-width="1.200" d="M4 4.500V2.500h12v8H4.500M9.500 10.500v3M6 13.500h7M1 1.500h4v4H1zM3 5.500v8h2"/></svg>
    <svg width="17" height="14" viewBox="0 0 17 14"><path fill="none" stroke="#fff" stroke-width="1.200" d="M1 5h2.500L7 1.500v11L3.500 9H1zM9 5c1 1 1 3 0 4M11.500 3c2 2 2 6 0 8M14 1c3 3 3 9 0 12"/></svg>
    <div class="clock"><span>8:33 AM</span><span>12/23/2024</span></div>
    <svg class="notes" width="17" height="17" viewBox="0 0 17 17"><path fill="none" stroke="#fff" stroke-width="1.200" d="M1 1.500h15v11h-5L8.500 15 6 12.500H1z"/></svg>
  </div>
</footer>
</body>
</html>
```
FILE: styles.css
```css
* { box-sizing: border-box; }
body {
  margin: 0;
  height: 100vh;
  display: flex;
  flex-direction: column;
  overflow: hidden;
  font: 11px/14px "Noto Sans", "Open Sans", sans-serif;
  color: #000;
}
button {
  border: 0;
  padding: 0;
  background: none;
  font: inherit;
  color: inherit;
  display: flex;
  align-items: center;
  justify-content: center;
  white-space: nowrap;
}
input { border: 0; padding: 0; background: none; font: inherit; min-width: 0; outline: 0; }
svg { display: block; flex: none; }
ul { list-style: none; margin: 0; padding: 0; }
a { color: inherit; text-decoration: none; }
h1, h2 { margin: 0; font: inherit; }
.sprite { position: absolute; width: 0; height: 0; }
.flip { transform: scaleX(-1); }
.faint { color: #ccc; }

.desktop { flex: 1; position: relative; overflow: hidden; min-height: 0; }

/* Browser */
.edge { height: 100%; display: flex; flex-direction: column; background: #f7f7f7; }
.edge-tabs { height: 32px; display: flex; background: #f7f7f7; }
.edge-corner { width: 83px; display: flex; align-items: center; gap: 17px; padding-left: 12px; background: #cacaca; border-bottom-right-radius: 6px; }
.edge-tab { width: 240px; display: flex; align-items: center; padding: 0 12px 0 13px; gap: 13px; }
.edge-tab button { margin-left: auto; }
.edge-new { width: 34px; background: #cacaca; }
.edge-win { flex: 1; display: flex; justify-content: flex-end; background: #cacaca; }
.edge-win button { width: 46px; }
.edge-bar { height: 37px; display: flex; align-items: center; padding-left: 20px; gap: 27px; }
.edge-url { flex: 1; height: 30px; display: flex; align-items: center; padding-left: 17px; margin-left: -3px; border-radius: 15px; background: #fff; }
.edge-tools { display: flex; }
.edge-tools button { width: 44px; height: 30px; }
.edge-tools button.on { width: 40px; margin: 0 2px; border-radius: 4px; background: #d3d3d3; }
.edge-tools button:last-child { width: 43px; }
.edge-page { flex: 1; margin: 0 3px 3px; border: 1px solid #dedede; border-radius: 8px; background: #f6f6f6; }

.downloads-pop { position: absolute; top: 66px; right: 132px; width: 360px; height: 92px; background: #fff; border: 1px solid #d4d4d4; }
.pop-head { height: 37px; display: flex; align-items: center; justify-content: flex-end; gap: 18px; padding: 0 17px 4px 0; border-bottom: 1px solid #e4e4e4; }

/* WinRAR */
.winrar { position: absolute; left: 68px; top: 45px; width: 480px; height: 482px; display: flex; flex-direction: column; background: #fff; border: 1px solid #8c8c8c; }
.wr-title { height: 30px; display: flex; align-items: center; gap: 5px; padding-left: 8px; color: #8a8a8a; }
.wr-menu { height: 20px; display: flex; gap: 16px; padding-left: 7px; color: #666; border-bottom: 1px solid #e4e4e4; }
.wr-tools { height: 64px; display: flex; padding: 6px 0 0 3px; margin-left: 4px; border-left: 2px dotted #c0c0c0; }
.wr-tools button { width: 58px; flex-direction: column; justify-content: flex-start; gap: 3px; }
.wr-path { height: 27px; display: flex; align-items: stretch; margin-left: 4px; border-left: 2px dotted #c0c0c0; color: #777; }
.wr-path button { width: 44px; padding-right: 12px; border-right: 2px dotted #c0c0c0; }
.wr-address { flex: 1; display: flex; align-items: center; gap: 5px; padding-left: 2px; margin: 1px 0 1px 5px; border: 1px solid #666; color: #000; }
.wr-list { flex: 1; border-top: 2px solid #888; border-left: 1px solid #888; background: #f7f7f7; }
.wr-head { position: relative; height: 25px; padding: 6px 7px; background: #fff; }
.wr-head svg { position: absolute; left: 125px; top: 1px; color: #888; }
.wr-row { height: 19px; display: flex; align-items: center; gap: 2px; padding-left: 5px; }
.wr-row.sel { background: #efefef; width: 214px; }
.wr-status { height: 25px; display: flex; align-items: center; gap: 8px; padding-left: 4px; background: #f0f0f0; border-top: 2px solid #888; }

/* Explorer window */
.explorer { position: absolute; left: 283px; top: 14px; width: 786px; height: 593px; display: flex; flex-direction: column; background: #fff; }
.ex-title { height: 31px; display: flex; align-items: center; }
.quick { width: 230px; display: flex; align-items: center; gap: 7px; padding-left: 8px; }
.quick button { margin-right: -2px; }
.quick i { width: 1px; height: 13px; background: #aaa; margin-right: 2px; }
.manage { width: 119px; align-self: flex-end; height: 27px; line-height: 27px; text-align: center; background: #ebc7fb; }
.ex-title h1 { margin-left: 13px; }
.ex-win { margin-left: auto; align-self: stretch; display: flex; padding-right: 1px; }
.ex-win button { width: 46px; }
.ex-tabs { height: 24px; display: flex; border-bottom: 1px solid #dadbdc; color: #333; }
.ex-tabs .file { width: 57px; background: #0063b1; color: #fff; }
.ex-tabs .home { width: 58px; margin-bottom: -1px; background: #f5f6f7; border: 1px solid #dadbdc; border-bottom: 0; }
.ex-tabs .plain { width: 57px; }
.ex-tabs .apptools { width: 119px; margin-left: 1px; border: solid #e4e4ea; border-width: 0 1px; }
.ex-help { margin-left: auto; display: flex; align-items: center; gap: 10px; padding-right: 4px; color: #999; }
.ex-help button { width: 16px; height: 16px; border-radius: 8px; background: #0a5cb4; color: #fff; font-weight: bold; }

.ribbon { height: 92px; display: flex; padding: 3px 0; background: #f5f6f7; border-bottom: 1px solid #dadbdc; color: #222; }
.rgroup { display: flex; flex-direction: column; border-right: 1px solid #dfe2e5; padding: 1px 0 0 4px; }
.rgroup h2 { margin-top: auto; padding-right: 8px; text-align: center; line-height: 12px; color: #444; }
.g-clip { width: 264px; }
.g-org { width: 165px; padding-left: 8px; }
.g-org h2 { padding-right: 12px; }
.g-new { width: 83px; }
.g-open { width: 133px; padding-left: 5px; }
.g-sel { width: 115px; padding-left: 7px; }
.g-sel h2 { padding-right: 12px; }
.rbody { display: flex; height: 67px; }
.big { width: 42px; flex-direction: column; justify-content: flex-start; white-space: normal; padding-top: 4px; gap: 4px; line-height: 13px; }
.big svg { height: 30px; }
.pinb { width: 70px; }
.props { width: 54px; }
.props::after { content: ""; border: 3px solid transparent; border-top-color: #333; }
.rcol { display: flex; flex-direction: column; padding-left: 3px; }
.rcol button { height: 22px; gap: 3px; justify-content: flex-start; }
.g-sel .rcol { padding-left: 0; }
.g-open .rcol { padding-left: 5px; }
.g-new .rcol .dd { gap: 0; }
.rcol.two { padding: 8px 0 0 1px; gap: 7px; width: 77px; }
.rcol.two.line { width: auto; border-left: 1px solid #dfe2e5; padding-left: 6px; }
.dd::after { content: ""; border: 3px solid transparent; border-top-color: #333; margin: 3px 0 0 2px; }
.dim { color: #858585; }

.ex-addr { height: 34px; display: flex; align-items: center; color: #555; padding: 0 13px 0 5px; }
.ex-addr > button { width: 30px; height: 22px; }
.ex-addr > .narrow { width: 16px; }
.ex-addr > .narrow + button { width: 26px; }
.ex-addr .faint { color: #d4d4d4; }
.crumbs { flex: 1; height: 22px; display: flex; align-items: center; gap: 8px; padding-left: 1px; border: 1px solid #d9d9d9; color: #777; }
.crumbs a { color: #000; }
.crumbs > svg:first-child { margin-right: -3px; }
.crumbs .prev { margin-left: auto; color: #555; }
.crumbs .reload { margin-left: -6px; width: 20px; height: 20px; border-left: 1px solid #d9d9d9; }
.find { width: 202px; height: 22px; display: flex; align-items: center; margin-left: 10px; padding: 0 8px; border: 1px solid #d9d9d9; }
.find input { flex: 1; }
.find input::placeholder { color: #666; opacity: 1; }

.ex-body { flex: 1; min-height: 0; display: flex; }
.tree { width: 141px; padding-top: 1px; white-space: nowrap; }
.tree li { height: 24px; display: flex; align-items: center; gap: 5px; padding-left: 33px; }
.tree .sub { padding-left: 41px; }
.tree .current { background: #d9d9d9; margin-right: 1px; }
.vscroll { width: 16px; display: flex; flex-direction: column; align-items: center; gap: 6px; padding: 7px 0 6px; background: #f0f0f0; color: #444; }
.vtrack { flex: 1; width: 16px; display: flex; flex-direction: column; }
.vthumb { height: 34%; margin-top: 154px; background: #cdcdcd; }
.files { flex: 1; display: flex; flex-direction: column; min-width: 0; margin-left: 4px; }
.files table { width: 602px; margin-left: 14px; table-layout: fixed; border-collapse: separate; border-spacing: 0; }
.c-date { width: 144px; }
.c-type { width: 120px; }
.c-size { width: 80px; }
.files th { position: relative; height: 28px; padding: 0 0 0 6px; text-align: left; font-weight: normal; color: #4c607a; border-right: 1px solid #e4e4e4; }
.files th:first-child { padding-left: 3px; }
.files .sort { position: absolute; left: 66px; top: 1px; color: #888; }
.files td { height: 21px; padding: 0; white-space: nowrap; }
.files td div { display: flex; align-items: center; gap: 4px; padding-left: 4px; overflow: hidden; }
.files td:last-child { text-align: right; color: #6d6d6d; padding-right: 4px; border-right: 4px solid transparent; background-clip: padding-box; }
.files .picked td { background-color: #cce8ff; box-shadow: inset 0 1px #99d1ff, inset 0 -1px #99d1ff; }
.files .group td { height: 32px; padding: 0; border: 0; text-align: left; color: #1e3287; font-size: 14px; line-height: 18px; }
.files .group div { margin-left: -8px; padding: 0; }
.files .group svg { color: #777; }
.files .group div::after { content: ""; flex: 1; height: 1px; margin-left: 4px; background: #e2e2e2; }
.hscroll { height: 16px; margin-top: auto; display: flex; align-items: center; gap: 5px; padding: 0 5px 0 4px; background: #f0f0f0; color: #444; }
.hthumb { flex: 1; align-self: stretch; margin-right: 2px; background: #cdcdcd; }
.ex-status { height: 24px; display: flex; align-items: center; gap: 7px; padding-left: 15px; color: #1e3a70; }
.count { margin-right: 14px; }
.views { margin-left: auto; display: flex; padding-right: 6px; }
.views button { width: 21px; height: 23px; }
.views .on { background: #cbeaf8; border: 1px solid #3fa4d0; }

/* Watermark */
.brand { position: absolute; right: 47px; bottom: 8px; display: flex; align-items: center; gap: 4px; color: #fff; font: 34px/62px "Roboto", sans-serif; filter: drop-shadow(0 0 2px #aaa); opacity: .85; }

/* Context menu */
.menu { position: absolute; left: 590px; bottom: 0; width: 432px; padding: 4px 0; background: #eee; border: 1px solid #a0a0a0; }
.menu button { width: 100%; height: 22px; justify-content: flex-start; padding: 0 10px; }
.menu i { width: 24px; }
.menu .more { margin-left: auto; }
.menu .sep { height: 7px; padding: 3px 10px; }
.menu .sep::before { content: ""; display: block; height: 1px; background: #919191; }

/* Taskbar */
.taskbar { height: 40px; display: flex; background: linear-gradient(90deg, #00161e, #000a1c); color: #fff; }
.task { width: 49px; height: 40px; border: solid transparent; border-width: 0 0 3px; padding-top: 3px; }
.task.start { width: 48px; }
.task-search { width: 288px; display: flex; align-items: center; gap: 10px; padding-left: 10px; background: #f0f0f0; border: 1px solid #bbb; font-size: 14px; }
.task-search input { flex: 1; }
.task-search input::placeholder { color: #333; opacity: 1; }
.task-search + .task { margin-right: 2px; }
.t-edge { width: 48px; margin-right: 1px; background: #98602d; border-color: #f77a10; }
.t-files { width: 48px; background: #3a4a55; border-color: #76b9ed; }
.t-rar { background: linear-gradient(#76b9ed, #76b9ed) center bottom / 40px 3px no-repeat border-box; }
.tray { margin-left: auto; display: flex; align-items: center; gap: 8px; padding-right: 24px; }
.hidden-icons { margin-right: 3px; }
.clock { display: flex; flex-direction: column; align-items: center; width: 60px; margin-left: -3px; line-height: 18px; }
.notes { margin-left: 6px; }
```
